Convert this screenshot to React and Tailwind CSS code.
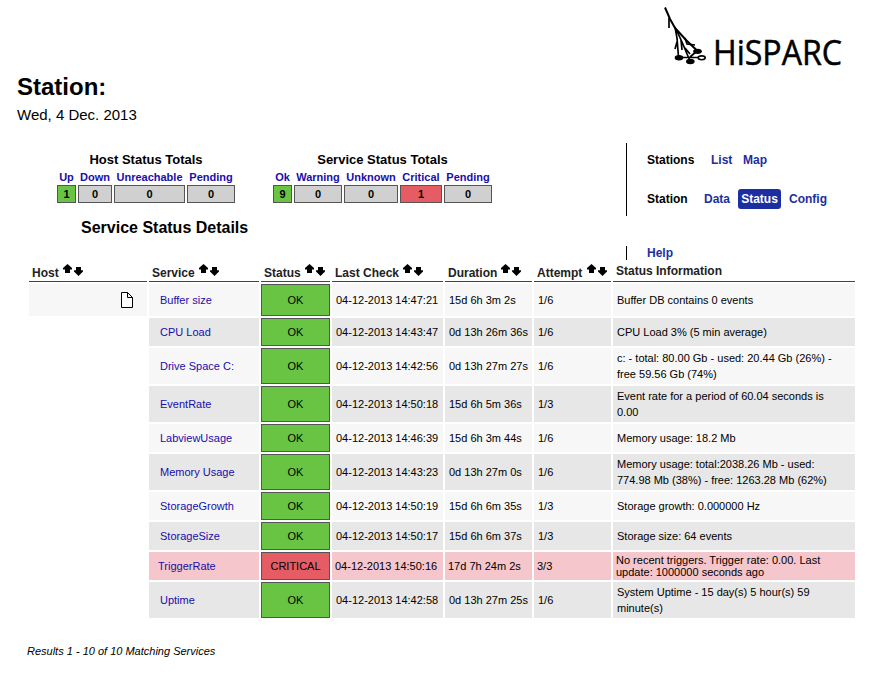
const rows = [
  ["Buffer size", "OK", "04-12-2013 14:47:21", "15d 6h 3m 2s", "1/6", ["Buffer DB contains 0 events"], "h-[32px]"],
  ["CPU Load", "OK", "04-12-2013 14:43:47", "0d 13h 26m 36s", "1/6", ["CPU Load 3% (5 min average)"], "h-[28px]"],
  ["Drive Space C:", "OK", "04-12-2013 14:42:56", "0d 13h 27m 27s", "1/6", ["c: - total: 80.00 Gb - used: 20.44 Gb (26%) -", "free 59.56 Gb (74%)"], "h-[36px]"],
  ["EventRate", "OK", "04-12-2013 14:50:18", "15d 6h 5m 36s", "1/3", ["Event rate for a period of 60.04 seconds is", "0.00"], "h-[36px]"],
  ["LabviewUsage", "OK", "04-12-2013 14:46:39", "15d 6h 3m 44s", "1/6", ["Memory usage: 18.2 Mb"], "h-[28px]"],
  ["Memory Usage", "OK", "04-12-2013 14:43:23", "0d 13h 27m 0s", "1/6", ["Memory usage: total:2038.26 Mb - used:", "774.98 Mb (38%) - free: 1263.28 Mb (62%)"], "h-[36px]"],
  ["StorageGrowth", "OK", "04-12-2013 14:50:19", "15d 6h 6m 35s", "1/3", ["Storage growth: 0.000000 Hz"], "h-[28px]"],
  ["StorageSize", "OK", "04-12-2013 14:50:17", "15d 6h 6m 37s", "1/3", ["Storage size: 64 events"], "h-[28px]"],
  ["TriggerRate", "CRITICAL", "04-12-2013 14:50:16", "17d 7h 24m 2s", "3/3", ["No recent triggers. Trigger rate: 0.00. Last", "update: 1000000 seconds ago"], "h-[28px]"],
  ["Uptime", "OK", "04-12-2013 14:42:58", "0d 13h 27m 25s", "1/6", ["System Uptime - 15 day(s) 5 hour(s) 59", "minute(s)"], "h-[36px]"],
];

function Arrows() {
  return (
    <svg width="21" height="12" viewBox="0 0 21 12" className="shrink-0">
      <path d="M4.5 0L9 4V5.5H7V9H2V5.5H0V4z" />
      <path d="M13 3h5v3.3h2v1.3L15.500 12L11 7.600V6.300h2z" />
    </svg>
  );
}

function Totals({ title, items, cols, className }) {
  return (
    <div className={className}>
      <h3 className="text-center text-[13px] leading-[16px] font-bold">{title}</h3>
      <div className={"mt-[2px] grid gap-x-[2px] text-center font-bold " + cols}>
        {items.map(([label]) => (
          <span key={label} className="flex h-[15px] items-center justify-center whitespace-nowrap text-[11px] leading-[15px] text-[#1a0dab]">{label}</span>
        ))}
        {items.map(([label, n, bg]) => (
          <span key={label + "n"} className={"h-[18px] border border-[#555] text-[11px] leading-[17px] " + bg}>{n}</span>
        ))}
      </div>
    </div>
  );
}

const gray = "bg-[#d0d0d0]";
const green = "bg-[#69c443]";
const red = "bg-[#e65c64]";
const heads = ["Host", "Service", "Status", "Last Check", "Duration", "Attempt"];

export default function App() {
  return (
    <div className="h-[686px] w-[871px] overflow-hidden bg-white font-['Liberation_Sans',Arial,sans-serif] text-black">
      <header className="flex h-[132px] justify-between">
        <div className="pt-[73px] pl-[17px]">
          <h1 className="text-[24px] leading-[28px] font-bold">Station:</h1>
          <p className="mt-[5px] text-[15px] leading-[18px]">Wed, 4 Dec. 2013</p>
        </div>
        <svg width="231" height="80" viewBox="0 0 231 80" fill="none" stroke="#000">
          <path d="M25 7.500L30 19L35 28L46 40L57 50.500" strokeWidth="2" />
          <path d="M29 18V28M35 27L37 38L38.500 57M36 29L42 42L50 61M37 42L35 49M41 40L42 50M50 54L45 48M45 38L47 44L55 45M39 57.500H58M50 57L57 51" strokeWidth="1.7" />
          <g fill="#000" stroke="none"><ellipse cx="39" cy="57.700" rx="4.300" ry="2.700" /><ellipse cx="50.300" cy="61.500" rx="4.300" ry="2.800" /><ellipse cx="57.500" cy="51.300" rx="4.300" ry="2.600" /></g>
          <ellipse cx="61.700" cy="57.800" rx="3.500" ry="1.900" fill="#fff" strokeWidth="1.600" />
          <text x="73" y="65" fontSize="34" fill="#000" strokeWidth="0.500" textLength="129" lengthAdjust="spacingAndGlyphs" className="font-['Open_Sans',sans-serif]">HiSPARC</text>
        </svg>
      </header>

      <section className="flex h-[131px]">
        <div className="w-[626px]">
          <div className="flex pt-[20px] pl-[57px]">
            <Totals title="Host Status Totals" className="w-[178px]" cols="grid-cols-[19px_34px_71px_48px]" items={[["Up", 1, green], ["Down", 0, gray], ["Unreachable", 0, gray], ["Pending", 0, gray]]} />
            <Totals title="Service Status Totals" className="ml-[38px] w-[219px]" cols="grid-cols-[19px_48px_54px_42px_48px]" items={[["Ok", 9, green], ["Warning", 0, gray], ["Unknown", 0, gray], ["Critical", 1, red], ["Pending", 0, gray]]} />
          </div>
          <h2 className="mt-[15px] ml-[81px] text-[16px] leading-[20px] font-bold">Service Status Details</h2>
        </div>
        <nav className="pt-[11px] text-[12px] leading-[16px] font-bold text-[#1c2fa0]">
          <div className="h-[73px] border-l border-black pt-[9px] pl-[20px]">
            <div className="flex"><span className="w-[64px] text-black">Stations</span><span className="w-[32px]">List</span><span>Map</span></div>
            <div className="mt-[21px] flex h-[20px] items-center"><span className="w-[57px] text-black">Station</span><span className="w-[34px]">Data</span><span className="flex h-[20px] w-[43px] items-center justify-center rounded-[3px] bg-[#1c2fa0] text-white">Status</span><span className="ml-[8px]">Config</span></div>
          </div>
          <div className="mt-[30px] h-[14px] border-l border-black pl-[20px] leading-[14px]">Help</div>
        </nav>
      </section>

      <main className="ml-[29px] w-[826px] text-[11px]">
        <div className="grid h-[19px] grid-cols-[118px_110px_69px_111px_87px_77px_242px] gap-x-[2px] text-[12px] leading-[14px] font-bold text-[#222]">
          {heads.map((h) => (
            <div key={h} className="flex h-[19px] items-start border-b border-[#444] pl-[3px] whitespace-nowrap">
              <span className="mt-[3px]">{h}</span>
              <span className={"mt-px flex text-black " + (h === "Attempt" ? "ml-[5px]" : "ml-[4px]")}><Arrows /></span>
            </div>
          ))}
          <div className="h-[19px] border-b border-[#444] pl-[3px]"><span className="block pt-px">Status Information</span></div>
        </div>
        <div className="mt-[2px] flex flex-col gap-[2px]">
          {rows.map(([name, status, check, dur, att, info, h], i) => {
            const crit = status === "CRITICAL";
            const bg = crit ? "bg-[#f5c6cb]" : i % 2 ? "bg-[#e7e7e7]" : "bg-[#f7f7f7]";
            const cell = "flex items-center whitespace-nowrap " + bg + (crit ? " pl-[3px]" : " pl-[4px]");
            return (
              <div key={name} className={"grid grid-cols-[118px_110px_69px_111px_87px_77px_242px] gap-x-[2px] " + h}>
                <div className={"flex items-center pl-[92px] " + (i === 0 ? bg : "")}>
                  {i === 0 && (
                    <svg width="12" height="16" viewBox="0 0 12 16" fill="#fff" stroke="#000"><path d="M.5.5h6l5 5v10H.5zM6.500.5v5h5" /></svg>
                  )}
                </div>
                <div className={"flex items-center text-[#1a0dab] " + bg + (crit ? " pl-[9px]" : " pl-[11px]")}>{name}</div>
                <div className={"flex items-center justify-center border border-[#555] " + (crit ? red : green)}>{status}</div>
                <div className={cell}>{check}</div>
                <div className={cell}>{dur}</div>
                <div className={cell}>{att}</div>
                <div className={cell}>
                  <div className={crit ? "leading-[12px]" : "leading-[16px]"}>{info.map((l) => <div key={l}>{l}</div>)}</div>
                </div>
              </div>
            );
          })}
        </div>
      </main>
      <footer className="mt-[26px] ml-[27px] text-[11px] leading-[14px] italic">Results 1 - 10 of 10 Matching Services</footer>
    </div>
  );
}
